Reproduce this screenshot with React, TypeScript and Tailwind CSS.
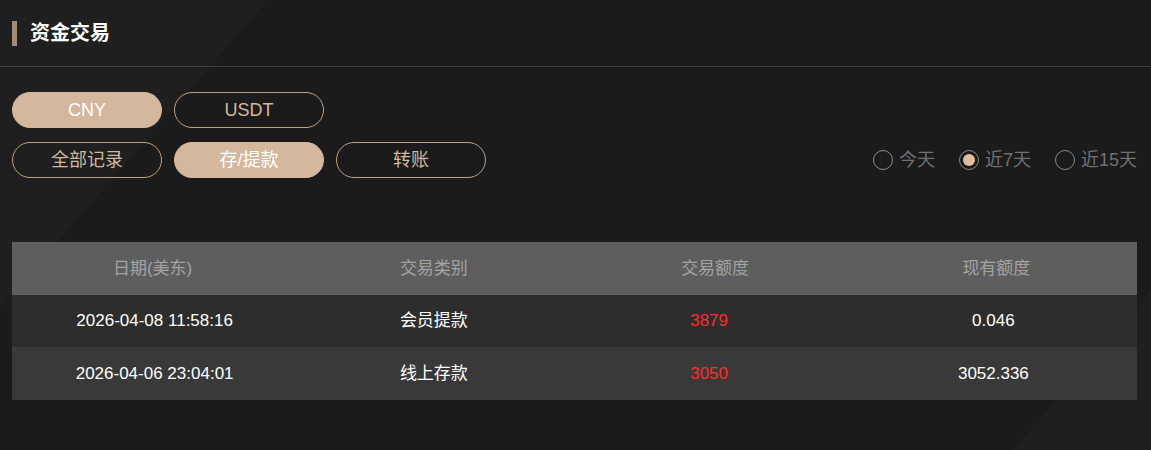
import React from "react";

const rows = [
	{ date: "2026-04-08 11:58:16", type: "会员提款", amount: "3879", balance: "0.046" },
	{ date: "2026-04-06 23:04:01", type: "线上存款", amount: "3050", balance: "3052.336" },
];

const Pill = ({ label, active }: { label: string; active?: boolean }) => (
	<button
		className={
			active
				? "w-[150px] h-9 rounded-full border border-[#d4b89e] bg-[#d4b89e] text-white text-[18px]"
				: "w-[150px] h-9 rounded-full border border-[#bfa083] bg-transparent text-[#d2b89f] text-[18px]"
		}
	>
		{label}
	</button>
);

const Radio = ({ label, checked }: { label: string; checked?: boolean }) => (
	<label className="flex items-center gap-[6px] text-[18px] text-[#707070]">
		<span className="w-5 h-5 rounded-full border-[1.5px] border-[#8a8a8a] flex items-center justify-center">
			{checked && <span className="w-3 h-3 rounded-full bg-[#e0be9d]" />}
		</span>
		{label}
	</label>
);

const App = () => {
	return (
		<div className="h-[450px] w-full bg-[linear-gradient(131deg,#1f1f1f_202px,#1b1b1b_202px,#1b1b1b_1060px,#1f1f1f_1060px)] font-['Liberation_Sans','Noto_Sans_CJK_SC',sans-serif]">
			{/* title */}
			<div className="h-[67px] flex items-center px-3 border-b border-[#473c33]">
				<span className="w-[5px] h-[25px] bg-[#a38b77]" />
				<h1 className="ml-[13px] text-[20px] font-bold text-white">资金交易</h1>
			</div>

			<div className="pl-3 pr-[14px] pt-[25px]">
				<div className="flex gap-3">
					<Pill label="CNY" active />
					<Pill label="USDT" />
				</div>
				<div className="mt-[14px] flex items-center justify-between">
					<div className="flex gap-3">
						<Pill label="全部记录" />
						<Pill label="存/提款" active />
						<Pill label="转账" />
					</div>
					<div className="flex items-center gap-6">
						<Radio label="今天" />
						<Radio label="近7天" checked />
						<Radio label="近15天" />
					</div>
				</div>

				{/* table */}
				<div className="mt-16 text-[17px]">
					<div className="grid grid-cols-4 h-[53px] items-center text-center bg-[#5e5e5e] text-[#a3a3a3]">
						<div>日期(美东)</div>
						<div>交易类别</div>
						<div>交易额度</div>
						<div>现有额度</div>
					</div>
					{rows.map((r, i) => (
						<div
							key={i}
							className={
								"grid grid-cols-4 items-center text-center text-white " +
								(i % 2 === 0 ? "h-[52px] bg-[#2d2d2d]" : "h-[53px] bg-[#393939]")
							}
						>
							<div className="pl-1">{r.date}</div>
							<div>{r.type}</div>
							<div className="pr-3 text-[#ff2b2b]">{r.amount}</div>
							<div className="pr-1.5">{r.balance}</div>
						</div>
					))}
				</div>
			</div>
		</div>
	);
};

export default App;
